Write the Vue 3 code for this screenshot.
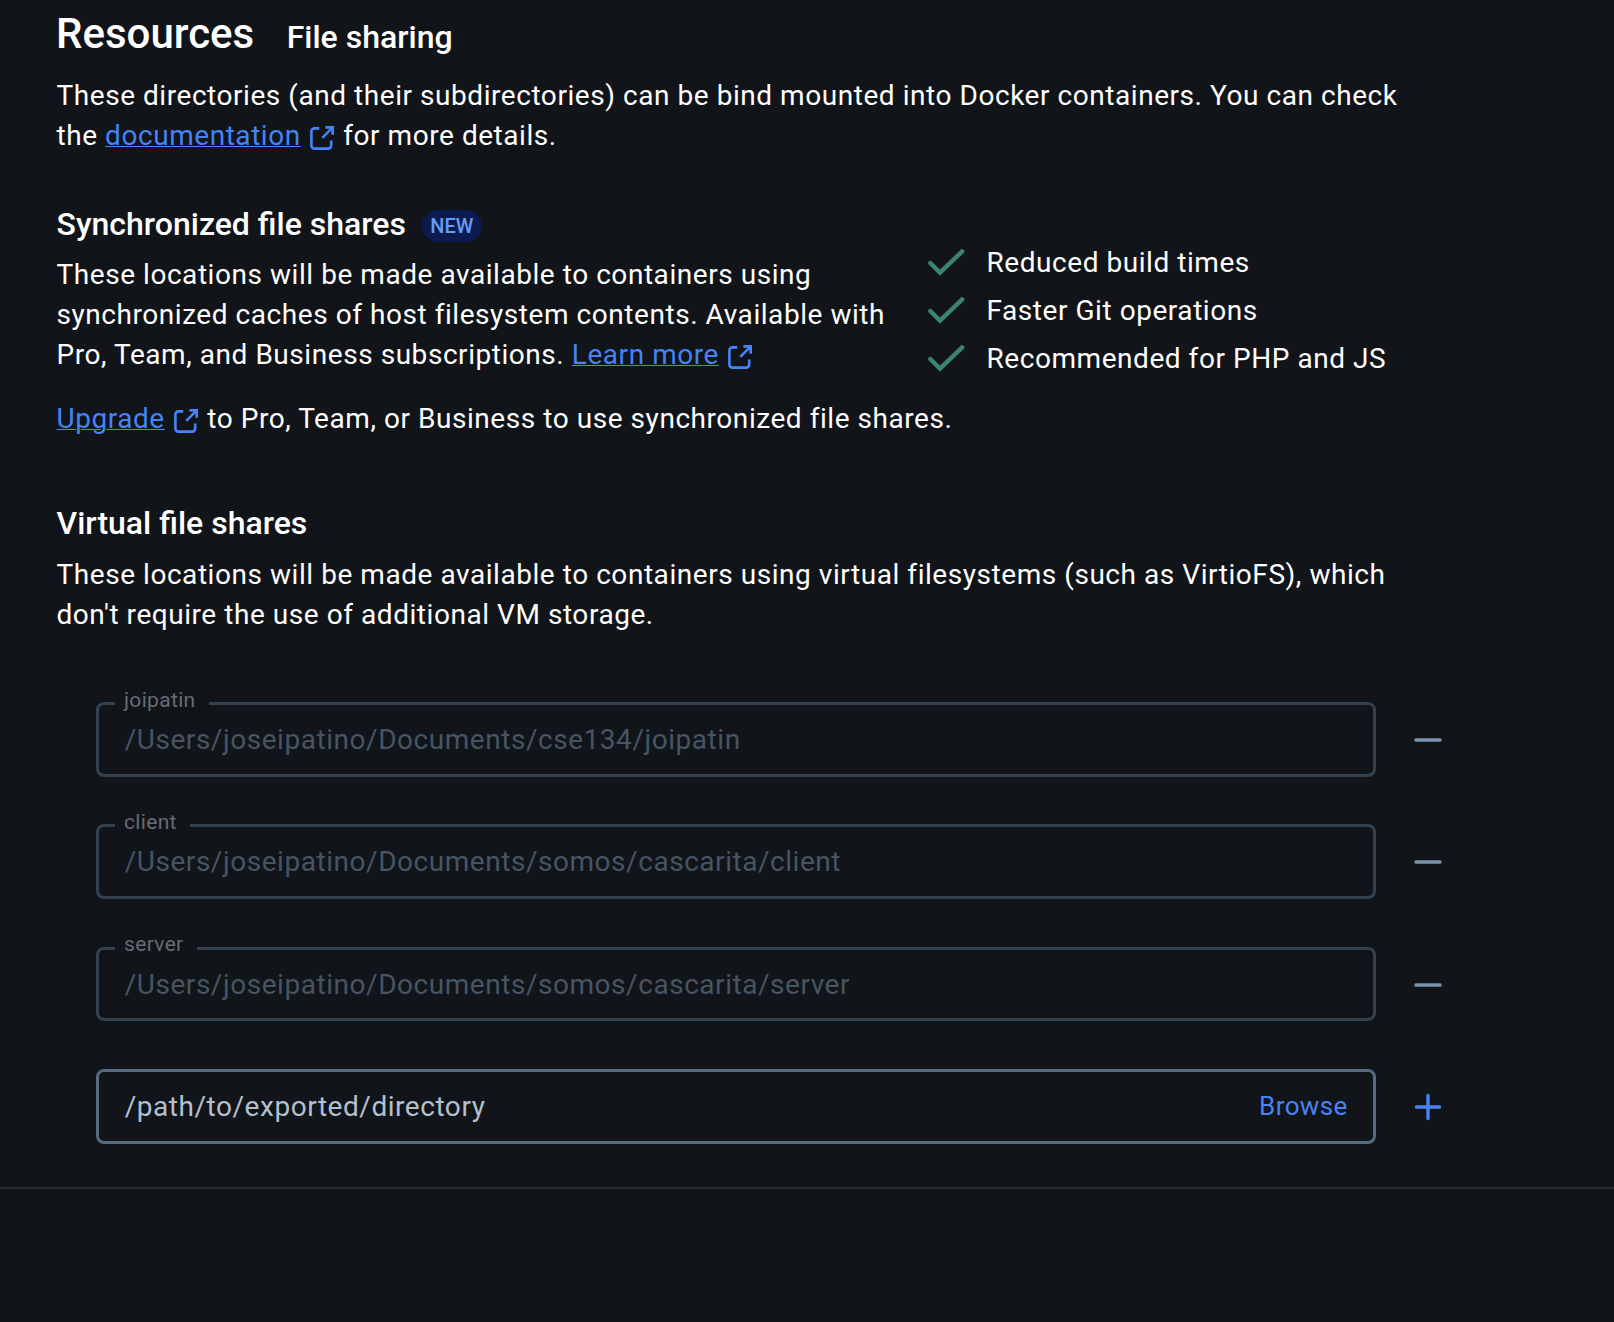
<script setup>
import { h } from 'vue'

const benefits = ['Reduced build times', 'Faster Git operations', 'Recommended for PHP and JS']
const shares = [
  { name: 'joipatin', path: '/Users/joseipatino/Documents/cse134/joipatin' },
  { name: 'client', path: '/Users/joseipatino/Documents/somos/cascarita/client' },
  { name: 'server', path: '/Users/joseipatino/Documents/somos/cascarita/server' },
]

const ExternalIcon = () =>
  h('svg', { class: 'external', viewBox: '0 0 24 24', 'aria-hidden': 'true' }, [
    h('path', { d: 'M9.2 2.4H4.4a3 3 0 0 0-3 3v14.2a3 3 0 0 0 3 3h13.8a3 3 0 0 0 3-3V14.6' }),
    h('path', { d: 'M15.4 1.4h7.3v7.3M22.4 1.7 12.3 11.8' }),
  ])
</script>

<template>
  <main class="page">
    <header class="head">
      <h1 class="page-title">Resources</h1>
      <span class="crumb">File sharing</span>
    </header>
    <p class="para intro">
      These directories (and their subdirectories) can be bind mounted into Docker containers. You can check<br />
      the <a class="link">documentation</a><ExternalIcon /> for more details.
    </p>

    <section class="sync">
      <div class="sync-text">
        <div class="heading">
          <h2>Synchronized file shares</h2>
          <span class="badge">NEW</span>
        </div>
        <p class="para">
          These locations will be made available to containers using<br />
          synchronized caches of host filesystem contents. Available with<br />
          Pro, Team, and Business subscriptions. <a class="link">Learn more</a><ExternalIcon />
        </p>
      </div>
      <ul class="benefits">
        <li v-for="b in benefits" :key="b" class="benefit">
          <svg class="check" viewBox="0 0 37 27" aria-hidden="true"><path d="M2.3 14 12 23.6 34.2 2.4" /></svg>
          <span>{{ b }}</span>
        </li>
      </ul>
    </section>
    <p class="para upgrade">
      <a class="link">Upgrade</a><ExternalIcon /> to Pro, Team, or Business to use synchronized file shares.
    </p>

    <section class="virtual">
      <h2>Virtual file shares</h2>
      <p class="para">
        These locations will be made available to containers using virtual filesystems (such as VirtioFS), which<br />
        don't require the use of additional VM storage.
      </p>
      <div class="rows">
        <div v-for="s in shares" :key="s.name" class="row">
          <div class="field disabled">
            <span class="label">{{ s.name }}</span>
            <span class="value">{{ s.path }}</span>
          </div>
          <svg class="action" viewBox="0 0 28 28" aria-hidden="true"><path d="M1.9 14h24.2" /></svg>
        </div>
        <div class="row">
          <div class="field">
            <span class="value">/path/to/exported/directory</span>
            <span class="browse">Browse</span>
          </div>
          <svg class="action add" viewBox="0 0 28 28" aria-hidden="true"><path d="M2.4 14h23.2M14 2.4v23.2" /></svg>
        </div>
      </div>
    </section>
    <hr class="divider" />
  </main>
</template>

<style>
body {
  margin: 0;
  background: #111418;
}
</style>

<style scoped>
.page {
  box-sizing: border-box;
  height: 1322px;
  overflow: hidden;
  background: #111418;
  color: #fff;
  font-family: Roboto, "Liberation Sans", sans-serif;
}
.head {
  display: flex;
  align-items: baseline;
  gap: 32.4px;
  height: 60px;
  padding: 9px 56px 0;
  box-sizing: border-box;
}
.page-title {
  margin: 0;
  font-size: 42px;
  font-weight: 500;
  line-height: 50px;
}
.crumb {
  font-size: 32px;
  font-weight: 500;
  line-height: 40px;
}
h2 {
  margin: 0;
  font-size: 32px;
  font-weight: 500;
  line-height: 40px;
}
.para {
  margin: 0;
  font-size: 28px;
  line-height: 40px;
  letter-spacing: 0.55px;
  white-space: nowrap;
}
.intro {
  padding: 16px 56.5px 0;
}
.link {
  color: #4583f7;
  text-decoration: underline;
  text-decoration-thickness: 1px;
  text-underline-offset: 1px;
}
.page :deep(.external) {
  width: 24px;
  height: 24px;
  margin: 0 2px 0 9px;
  vertical-align: -5px;
  fill: none;
  stroke: #4583f7;
  stroke-width: 2.6;
}
.sync {
  display: flex;
  padding: 43px 56.5px 0;
}
.sync-text {
  width: 871.5px;
}
.heading {
  display: flex;
  align-items: center;
  gap: 16px;
  height: 50px;
  margin-bottom: 6px;
}
.badge {
  margin-top: 4px;
  padding: 0 8.4px;
  border-radius: 16px;
  background: #0b1b4f;
  color: #659cf5;
  font-size: 20px;
  font-weight: 500;
  line-height: 32px;
}
.benefits {
  margin: 0;
  padding: 39px 0 0;
  list-style: none;
}
.benefit {
  display: flex;
  align-items: center;
  gap: 21.5px;
  height: 48px;
  font-size: 28px;
  letter-spacing: 0.55px;
  white-space: nowrap;
}
.check {
  width: 37px;
  height: 27px;
  fill: none;
  stroke: #3a8570;
  stroke-width: 4.4;
  stroke-linecap: round;
}
.upgrade {
  padding: 17px 56.5px 0;
}
.virtual {
  padding: 64px 56.5px 0;
}
.virtual h2 {
  margin-bottom: 12px;
}
.rows {
  display: flex;
  flex-direction: column;
  gap: 47.67px;
  padding: 67px 0 0 39.5px;
}
.row {
  display: flex;
  align-items: center;
  gap: 38px;
}
.field {
  position: relative;
  display: flex;
  align-items: center;
  justify-content: space-between;
  box-sizing: border-box;
  width: 1280px;
  height: 74.66px;
  padding: 1.6px 25.2px 0 25.7px;
  border: 3px solid #566a81;
  border-radius: 8px;
  color: #b3c0ce;
  font-size: 28px;
  line-height: 40px;
  letter-spacing: 0.54px;
  white-space: nowrap;
}
.field.disabled {
  border-color: #33414f;
  color: #465564;
}
.label {
  position: absolute;
  top: -17.2px;
  left: 16px;
  padding: 0 13px 0 9px;
  background: #111418;
  color: #666c74;
  font-size: 21px;
  line-height: 25px;
  letter-spacing: 0.33px;
}
.browse {
  margin-bottom: 2px;
  color: #4583f7;
  font-size: 26px;
  letter-spacing: 0.4px;
}
.action {
  width: 28px;
  height: 28px;
  margin-top: 1.2px;
  fill: none;
  stroke: #7c93ac;
  stroke-width: 3.4;
  stroke-linecap: round;
}
.action.add {
  stroke: #4583f7;
}
.divider {
  height: 2px;
  margin: 43.4px 0 0;
  border: 0;
  background: #2b2e32;
}
</style>
